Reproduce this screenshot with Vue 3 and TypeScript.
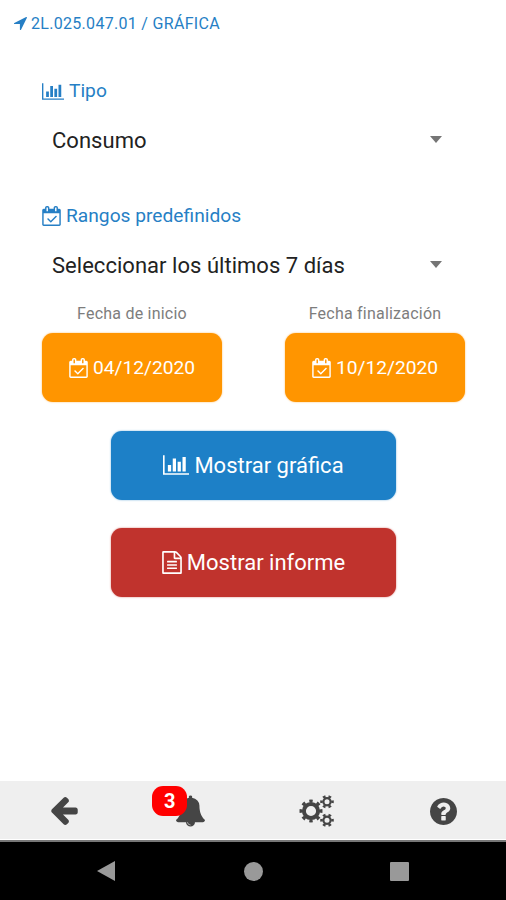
<script setup lang="ts">
interface DateField {
  label: string
  value: string
}

const location = '2L.025.047.01 / GRÁFICA'
const dates: DateField[] = [
  { label: 'Fecha de inicio', value: '04/12/2020' },
  { label: 'Fecha finalización', value: '10/12/2020' },
]
const notifications = 3
</script>

<template>
  <div class="screen">
    <svg class="sprite" aria-hidden="true">
      <symbol id="i-arrow" viewBox="0 346 1408 1408">
        <path d="M1401 439l-640 1280q-17 35-57 35-5 0-15-2-22-5-35.500-22.500T640 1690v-576H64q-22 0-39.500-13.500T2 1065t4-42 29-30L1315 353q13-7 29-7 27 0 45 19 15 14 18.500 34.500T1401 439z" />
      </symbol>
      <symbol id="i-chart" viewBox="0 128 2048 1536">
        <path d="M640 896v512H384V896h256zm384-512v1024H768V384h256zm1024 1152v128H0V128h128v1408h1920zm-640-896v768h-256V640h256zm384-384v1152h-256V256h256z" />
      </symbol>
      <symbol id="i-calendar" viewBox="0 0 1664 1792">
        <path d="M1303 964l-512 512q-10 9-23 9t-23-9l-288-288q-9-10-9-23t9-22l46-46q9-9 22-9t23 9l220 220 444-444q10-9 23-9t22 9l46 46q9 9 9 22t-9 23zm-1175 700h1408V640H128v1024zM512 448V160q0-14-9-23t-23-9h-64q-14 0-23 9t-9 23v288q0 14 9 23t23 9h64q14 0 23-9t9-23zm768 0V160q0-14-9-23t-23-9h-64q-14 0-23 9t-9 23v288q0 14 9 23t23 9h64q14 0 23-9t9-23zm384-64v1280q0 52-38 90t-90 38H128q-52 0-90-38t-38-90V384q0-52 38-90t90-38h128v-96q0-66 47-113T416 0h64q66 0 113 47t47 113v96h384v-96q0-66 47-113t113-47h64q66 0 113 47t47 113v96h128q52 0 90 38t38 90z" />
      </symbol>
      <symbol id="i-file" viewBox="0 0 1536 1792">
        <path d="M1468 380q28 28 48 76t20 88v1152q0 40-28 68t-68 28H96q-40 0-68-28t-28-68V96q0-40 28-68T96 0h896q40 0 88 20t76 48zm-444-244v376h376q-10-29-22-41l-313-313q-12-12-41-22zm384 1528V640H992q-40 0-68-28t-28-68V128H128v1536h1280zM384 800q0-14 9-23t23-9h704q14 0 23 9t9 23v64q0 14-9 23t-23 9H416q-14 0-23-9t-9-23v-64zm736 224q14 0 23 9t9 23v64q0 14-9 23t-23 9H416q-14 0-23-9t-9-23v-64q0-14 9-23t23-9h704zm0 256q14 0 23 9t9 23v64q0 14-9 23t-23 9H416q-14 0-23-9t-9-23v-64q0-14 9-23t23-9h704z" />
      </symbol>
    </svg>

    <header class="crumb">
      <svg class="crumb-icon"><use href="#i-arrow" /></svg>
      <span>{{ location }}</span>
    </header>

    <main class="form">
      <section class="field">
        <h2 class="label">
          <svg class="label-chart"><use href="#i-chart" /></svg>
          <span>Tipo</span>
        </h2>
        <div class="select">
          <span>Consumo</span>
          <i class="caret"></i>
        </div>
      </section>

      <section class="field">
        <h2 class="label">
          <svg class="label-calendar"><use href="#i-calendar" /></svg>
          <span>Rangos predefinidos</span>
        </h2>
        <div class="select">
          <span>Seleccionar los últimos 7 días</span>
          <i class="caret"></i>
        </div>
      </section>

      <div class="dates">
        <div v-for="d in dates" :key="d.label" class="date">
          <span class="date-label">{{ d.label }}</span>
          <button class="date-button" type="button">
            <svg class="date-icon"><use href="#i-calendar" /></svg>
            <span>{{ d.value }}</span>
          </button>
        </div>
      </div>

      <div class="actions">
        <button class="action chart" type="button">
          <svg class="action-chart"><use href="#i-chart" /></svg>
          <span>Mostrar gráfica</span>
        </button>
        <button class="action report" type="button">
          <svg class="action-file"><use href="#i-file" /></svg>
          <span>Mostrar informe</span>
        </button>
      </div>
    </main>

    <nav class="tabs">
      <div class="tab">
        <svg class="back" viewBox="64 117 1472 1558">
          <path d="M1536 832v128q0 53-32.500 90.500T1419 1088H715l293 294q38 36 38 90t-38 90l-75 76q-37 37-90 37-52 0-91-37L101 986q-37-37-37-90 0-52 37-91l651-650q38-38 91-38 52 0 90 38l75 74q38 38 38 91t-38 91L715 704h704q52 0 84.500 37.500T1536 832z" />
        </svg>
      </div>
      <div class="tab">
        <span class="bell-wrap">
          <svg class="bell" viewBox="64 0 1664 1792">
            <path d="M912 1696q0-16-16-16-59 0-101.500-42.500T752 1536q0-16-16-16t-16 16q0 73 51.500 124.500T896 1712q16 0 16-16zm816-288q0 52-38 90t-90 38h-448q0 106-75 181t-181 75-181-75-75-181H192q-52 0-90-38t-38-90q50-42 91-88t85-119.500 74.500-158.500 50-206T384 576q0-152 117-282.500T808 135q-8-19-8-39 0-40 28-68t68-28 68 28 28 68q0 20-8 39 190 28 307 158.500T1408 576q0 139 19.500 260t50 206 74.500 158.500 85 119.500 91 88z" />
          </svg>
          <b class="badge">{{ notifications }}</b>
        </span>
      </div>
      <div class="tab">
        <svg class="cogs" viewBox="0 0 36 32">
          <g fill="none" stroke="#454545">
            <circle cx="12" cy="16" r="7.100" stroke-width="4" />
            <circle cx="12" cy="16" r="10" stroke-width="3" pathLength="80" stroke-dasharray="4.400 5.600" stroke-dashoffset="2.200" />
            <circle cx="28" cy="6.700" r="3.600" stroke-width="2.200" />
            <circle cx="28" cy="6.700" r="5.500" stroke-width="2.600" pathLength="60" stroke-dasharray="4.600 5.400" stroke-dashoffset="2.300" />
            <circle cx="28" cy="25.200" r="3.600" stroke-width="2.200" />
            <circle cx="28" cy="25.200" r="5.500" stroke-width="2.600" pathLength="60" stroke-dasharray="4.600 5.400" stroke-dashoffset="2.300" />
          </g>
        </svg>
      </div>
      <div class="tab">
        <svg class="help" viewBox="0 128 1536 1536">
          <path d="M896 1376v-192q0-14-9-23t-23-9H672q-14 0-23 9t-9 23v192q0 14 9 23t23 9h192q14 0 23-9t9-23zm256-672q0-88-55.500-163T958 425t-170-41q-243 0-371 213-15 24 8 42l132 100q7 6 19 6 16 0 25-12 53-68 86-92 34-24 86-24 48 0 85.500 26t37.500 59q0 38-20 61t-68 45q-63 28-115.500 86.500T640 1020v36q0 14 9 23t23 9h192q14 0 23-9t9-23q0-19 21.500-49.500T972 957q32-18 49-28.500t46-35 44.500-48 28-60.500 12.500-81zm384 192q0 209-103 385.500T1153.500 1561 768 1664t-385.500-103T103 1281.500 0 896t103-385.500T382.500 231 768 128t385.500 103T1433 510.500 1536 896z" />
        </svg>
      </div>
    </nav>

    <footer class="system">
      <svg class="sys-back" viewBox="0 0 18 20"><path d="M0 10L18 0v20z" /></svg>
      <i class="sys-home"></i>
      <i class="sys-recent"></i>
    </footer>
  </div>
</template>

<style>
body {
  margin: 0;
  background: #fff;
}
</style>

<style scoped>
.screen {
  box-sizing: border-box;
  display: flex;
  flex-direction: column;
  width: 506px;
  height: 900px;
  overflow: hidden;
  background: #fff;
  font-family: Roboto, 'Liberation Sans', sans-serif;
  white-space: nowrap;
}
.sprite {
  display: none;
}
svg {
  display: block;
  flex: none;
  fill: currentColor;
}
.crumb {
  display: flex;
  align-items: center;
  gap: 4px;
  height: 46px;
  padding-left: 14px;
  color: #267fc5;
  font-size: 16px;
  letter-spacing: 0.3px;
}
.crumb-icon {
  width: 13px;
  height: 13px;
}
.form {
  display: flex;
  flex: 1;
  flex-direction: column;
  padding: 30px 41px 0 42px;
}
.field {
  height: 125px;
}
.label {
  display: flex;
  align-items: center;
  height: 30px;
  margin: 0;
  color: #267fc5;
  font-size: 19.2px;
  font-weight: 400;
}
.label span {
  padding-bottom: 2px;
}
.label-chart {
  width: 22px;
  height: 17px;
  margin-right: 5px;
}
.label-calendar {
  width: 19px;
  height: 20px;
  margin-right: 5px;
}
.select {
  display: flex;
  align-items: center;
  justify-content: space-between;
  height: 68px;
  padding: 0 23px 0 10px;
  color: #222;
  font-size: 22px;
  letter-spacing: 0.03px;
}
.caret {
  margin-top: -2px;
  border: solid transparent;
  border-width: 7px 6px 0;
  border-top-color: #757575;
}
.dates {
  display: flex;
  justify-content: space-between;
  margin-top: -25px;
}
.date {
  display: flex;
  flex-direction: column;
  align-items: center;
  width: 180px;
}
.date-label {
  height: 32px;
  color: #7d7d7d;
  font-size: 16px;
  letter-spacing: 0.22px;
  line-height: 26px;
}
button {
  display: flex;
  align-items: center;
  justify-content: center;
  height: 69px;
  padding: 0;
  border: 0;
  border-radius: 11px;
  color: #fff;
  font-family: inherit;
}
.date-button {
  width: 180px;
  gap: 5px;
  background: #ff9500;
  box-shadow: 0 0 2px #ffb95e;
  font-size: 19.2px;
}
.date-icon {
  width: 19px;
  height: 20px;
}
.actions {
  display: flex;
  flex-direction: column;
  align-items: center;
  gap: 28px;
  margin-top: 28.5px;
}
.action {
  width: 285px;
  gap: 5px;
  font-size: 22px;
}
.chart {
  background: #1d80c7;
  box-shadow: 0 0 2px #6babd9;
}
.report {
  background: #c0332d;
  box-shadow: 0 0 2px #d5716d;
}
.action-chart {
  width: 26px;
  height: 20px;
}
.action-file {
  width: 20px;
  height: 23px;
}
.tabs {
  display: grid;
  grid-template-columns: repeat(4, 1fr);
  height: 59px;
  border-bottom: 2px solid #777;
  background: linear-gradient(#efefef 58px, #fff 58px);
  color: #454545;
}
.tab {
  display: flex;
  align-items: center;
  justify-content: center;
  padding-top: 1px;
}
.back {
  width: 27px;
  height: 28px;
  margin-left: 2px;
}
.bell-wrap {
  position: relative;
  margin-left: 2px;
}
.bell {
  width: 29px;
  height: 32px;
}
.badge {
  position: absolute;
  top: -9px;
  left: -24px;
  width: 35px;
  height: 30px;
  border-radius: 11px;
  background: #f00;
  color: #fff;
  font-size: 20px;
  line-height: 31px;
  text-align: center;
}
.cogs {
  width: 36px;
  height: 32px;
  margin-left: 2px;
}
.help {
  width: 27px;
  height: 27px;
  margin-left: 2px;
}
.system {
  display: flex;
  align-items: center;
  height: 58px;
  padding-left: 97px;
  background: #000;
  color: #999;
}
.sys-back {
  width: 18px;
  height: 20px;
}
.sys-home {
  width: 19px;
  height: 19px;
  margin-left: 129px;
  border-radius: 50%;
  background: #999;
}
.sys-recent {
  width: 19px;
  height: 19px;
  margin-left: 127px;
  border-radius: 1px;
  background: #999;
}
</style>
